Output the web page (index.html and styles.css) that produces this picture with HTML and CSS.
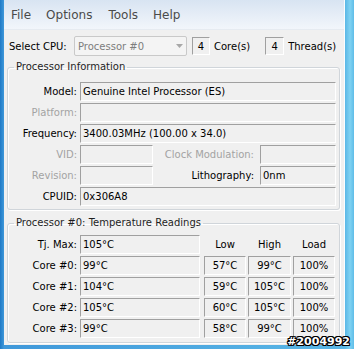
FILE: index.html
```html
<!DOCTYPE html>
<html>
<head>
<meta charset="utf-8">
<link rel="stylesheet" href="styles.css">
</head>
<body>
<div class="screen">
  <div class="window">
    <div class="menubar">
      <span class="menu">File</span>
      <span class="menu">Options</span>
      <span class="menu">Tools</span>
      <span class="menu">Help</span>
    </div>
    <div class="cpu-row">
      <span class="cpu-label">Select CPU:</span>
      <div class="combo">
        <span>Processor #0</span>
        <svg class="arrow" width="7" height="4" viewBox="0 0 7 4"><path d="M0 0h7L3.5 4z" fill="#a8a8a8"/></svg>
      </div>
      <span class="count">4</span>
      <span class="count-label">Core(s)</span>
      <span class="count count-2">4</span>
      <span class="count-label">Thread(s)</span>
    </div>

    <fieldset class="group group-info">
      <legend>Processor Information</legend>
      <div class="row">
        <span class="label">Model:</span>
        <span class="field grow">Genuine Intel Processor (ES)</span>
      </div>
      <div class="row">
        <span class="label disabled">Platform:</span>
        <span class="field grow"></span>
      </div>
      <div class="row">
        <span class="label">Frequency:</span>
        <span class="field grow">3400.03MHz (100.00 x 34.0)</span>
      </div>
      <div class="row">
        <span class="label disabled">VID:</span>
        <span class="field short"></span>
        <span class="label2 disabled">Clock Modulation:</span>
        <span class="field right"></span>
      </div>
      <div class="row">
        <span class="label disabled">Revision:</span>
        <span class="field short"></span>
        <span class="label2">Lithography:</span>
        <span class="field right">0nm</span>
      </div>
      <div class="row">
        <span class="label">CPUID:</span>
        <span class="field grow">0x306A8</span>
      </div>
    </fieldset>

    <fieldset class="group group-temp">
      <legend>Processor #0: Temperature Readings</legend>
      <div class="temps">
        <span class="label">Tj. Max:</span>
        <span class="field">105°C</span>
        <span class="head">Low</span>
        <span class="head">High</span>
        <span class="head">Load</span>

        <span class="label">Core #0:</span>
        <span class="field">99°C</span>
        <span class="field num">57°C</span>
        <span class="field num">99°C</span>
        <span class="field num">100%</span>

        <span class="label">Core #1:</span>
        <span class="field">104°C</span>
        <span class="field num">59°C</span>
        <span class="field num">105°C</span>
        <span class="field num">100%</span>

        <span class="label">Core #2:</span>
        <span class="field">105°C</span>
        <span class="field num">60°C</span>
        <span class="field num">105°C</span>
        <span class="field num">100%</span>

        <span class="label">Core #3:</span>
        <span class="field">99°C</span>
        <span class="field num">58°C</span>
        <span class="field num">99°C</span>
        <span class="field num">100%</span>
      </div>
    </fieldset>
  </div>
  <span class="watermark">#2004992</span>
</div>
</body>
</html>
```

FILE: styles.css
```css
* { box-sizing: border-box; }

html, body {
  margin: 0;
  padding: 0;
}

body {
  width: 354px;
  height: 349px;
  overflow: hidden;
  font-family: "DejaVu Sans", sans-serif;
  font-size: 10px;
  color: #000;
}

.screen {
  position: relative;
  width: 354px;
  height: 349px;
  background: linear-gradient(90deg, #1f7ac6 0, #3f98da 4px, #5ab7e6 345px, #7fd2f2 350px, #5fbde8 354px);
  padding: 0 9px 4px 4px;
}

.window {
  width: 341px;
  height: 345px;
  background: #f0f0f0;
  border-right: 1px solid #fbfdfe;
}

.menubar {
  height: 30px;
  display: flex;
  align-items: center;
  padding: 1px 0 0 7px;
  background: linear-gradient(180deg, #d8e4f2 0, #e4ecf6 45%, #f2f6fb 100%);
  border-bottom: 1px solid #e6ebf1;
  font-size: 12px;
  color: #4a4a4a;
}

.menu {
  margin-right: 15px;
}

.menu:nth-child(2) { margin-right: 16px; }

.cpu-row {
  display: flex;
  align-items: center;
  margin-top: 6px;
  height: 20px;
  padding-left: 5px;
}

.cpu-label {
  width: 65px;
}

.combo {
  width: 113px;
  height: 20px;
  border: 1px solid #c9c9c9;
  border-radius: 2px;
  background: #f4f4f4;
  color: #7d7d7d;
  display: flex;
  align-items: center;
  justify-content: space-between;
  padding: 0 3px 0 3px;
}

.arrow { display: block; }

.count {
  margin-left: 5px;
  width: 18px;
  height: 18px;
  line-height: 17px;
  border-top: 1px solid #a0a0a0;
  border-left: 1px solid #a0a0a0;
  border-right: 1px solid #fff;
  border-bottom: 1px solid #fff;
  text-align: center;
}

.count-2 {
  margin-left: 15px;
  width: 19px;
}

.count-label {
  margin-left: 4px;
}

.group {
  margin: 4px 4px 0 3px;
  padding: 8px 3px 3px 0;
  border: 1px solid #d0d5da;
  border-radius: 3px;
  box-shadow: inset 1px 1px 0 #fff, 1px 1px 0 #fff;
  min-width: 0;
}

.group legend {
  margin-left: 6px;
  padding: 0 2px;
  line-height: 14px;
  color: #1e1e1e;
}

.group-temp {
  margin-top: 6px;
  padding-top: 5px;
  padding-bottom: 4px;
}

.row {
  display: flex;
  height: 19px;
  line-height: 17px;
  margin-bottom: 2px;
}

.row:last-child { margin-bottom: 0; }

.label {
  width: 69px;
  text-align: right;
  flex: none;
  line-height: 19px;
}

.disabled { color: #a3a3a3; }

.field {
  height: 19px;
  margin-left: 3px;
  padding-left: 2px;
  border-top: 1px solid #a0a0a0;
  border-left: 1px solid #a0a0a0;
  border-right: 1px solid #fff;
  border-bottom: 1px solid #fff;
  line-height: 17px;
  white-space: nowrap;
}

.grow { flex: 1; }
.short { width: 73px; flex: none; }
.right { width: 76px; flex: none; }

.label2 {
  flex: 1;
  text-align: right;
  line-height: 19px;
  margin-right: 3px;
}

.temps {
  display: grid;
  grid-template-columns: 72px 124px 44px 45px 42px;
  grid-auto-rows: 19px;
  row-gap: 2px;
}

.temps .label {
  width: auto;
  padding-right: 3px;
}

.temps .field {
  margin-left: 0;
  margin-right: 2px;
}

.temps > :nth-child(5n+2) { margin-right: 4px; }
.temps > :nth-child(5n) { margin-right: 0; }

.num {
  text-align: center;
  padding-left: 0;
}

.head {
  text-align: center;
  line-height: 19px;
  margin-right: 2px;
}

.temps > .head:nth-child(5) { margin-right: 0; }

.watermark {
  position: absolute;
  right: 4px;
  bottom: 1px;
  font-weight: bold;
  font-size: 11px;
  line-height: 13px;
  color: #fff;
  text-shadow: 1px 0 0 #000, -1px 0 0 #000, 0 1px 0 #000, 0 -1px 0 #000, 1px 1px 0 #000, -1px -1px 0 #000, 1px -1px 0 #000, -1px 1px 0 #000;
}
```
